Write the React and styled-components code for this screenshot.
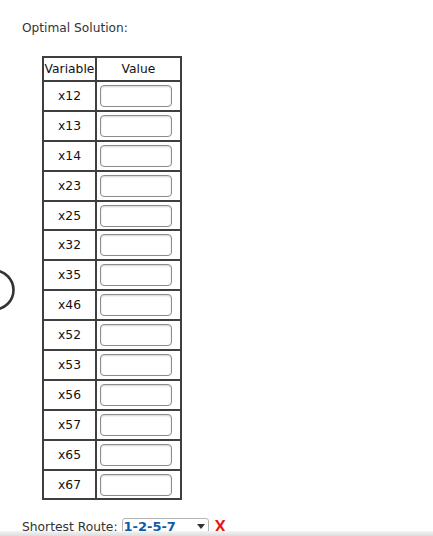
import React from 'react'
import styled, { createGlobalStyle } from 'styled-components'

const Global = createGlobalStyle`
  html, body {
    margin: 0;
    padding: 0;
    background: #fff;
  }
  body {
    font-family: "DejaVu Sans", Verdana, sans-serif;
    font-size: 12px;
    color: #222;
  }
`

const Page = styled.div`
  position: relative;
  height: 536px;
  overflow: hidden;
  padding: 21px 22px 0;
  box-sizing: border-box;
`

const Title = styled.div`
  color: #333;
  font-size: 12.2px;
  line-height: 15px;
`

const Table = styled.table`
  margin: 20px 0 0 20px;
  border: 1px solid #3f3f3f;
  border-spacing: 0;
  width: 140px;
  table-layout: fixed;
`

const HeadCell = styled.th`
  border: 1px solid #3f3f3f;
  font-weight: normal;
  color: #111;
  height: 22px;
  padding: 0;
  width: ${p => p.w}px;
  text-align: center;
  font-size: 12.3px;
`

const VarCell = styled.td`
  border: 1px solid #3f3f3f;
  height: 27.9px;
  padding: 0;
  text-align: center;
  color: #111;
  font-size: 12.3px;
`

const ValueCell = styled.td`
  border: 1px solid #3f3f3f;
  height: 27.9px;
  padding: 0 0 0 3px;
  vertical-align: middle;
`

const Input = styled.input`
  display: block;
  width: 72px;
  height: 22px;
  box-sizing: border-box;
  border: 1px solid #8c8c8c;
  border-radius: 4px;
  box-shadow: inset 0 1px 2px rgba(0, 0, 0, 0.18);
  background: #fff;
  padding: 0 3px;
  font-family: inherit;
  font-size: 12px;
  outline: none;
`

const RouteRow = styled.div`
  display: flex;
  align-items: center;
  gap: 4px;
  margin-top: 18px;
  color: #333;
  font-size: 12.3px;
`

const Select = styled.div`
  display: flex;
  align-items: center;
  justify-content: space-between;
  width: 87px;
  height: 17px;
  box-sizing: border-box;
  border: 1px solid #b5b5b5;
  border-radius: 3px;
  padding: 0 3px 0 1px;
  color: #0f5ca6;
  font-weight: bold;
  font-size: 13px;
`

const Arrow = styled.span`
  width: 0;
  height: 0;
  border-left: 4px solid transparent;
  border-right: 4px solid transparent;
  border-top: 5px solid #333;
`

const Wrong = styled.span`
  color: #e8141a;
  font-weight: bold;
  font-size: 17px;
  line-height: 17px;
  margin-left: 2px;
  font-family: "Liberation Sans", Arial, sans-serif;
`

const Ring = styled.svg`
  position: absolute;
  left: -30px;
  top: 268px;
`

const BottomShade = styled.div`
  position: absolute;
  left: 0;
  right: 0;
  bottom: 0;
  height: 5px;
  background: linear-gradient(#f4f4f4, #dcdcdc);
`

const vars = ['x12', 'x13', 'x14', 'x23', 'x25', 'x32', 'x35', 'x46', 'x52', 'x53', 'x56', 'x57', 'x65', 'x67']

export default function App() {
  return (
    <Page>
      <Global />
      <Ring width="46" height="44" viewBox="0 0 46 44">
        <circle cx="24" cy="22" r="19.5" fill="none" stroke="#333" strokeWidth="2.6" />
      </Ring>
      <Title>Optimal Solution:</Title>
      <Table>
        <thead>
          <tr>
            <HeadCell w={51}>Variable</HeadCell>
            <HeadCell w={83}>Value</HeadCell>
          </tr>
        </thead>
        <tbody>
          {vars.map(v => (
            <tr key={v}>
              <VarCell>{v}</VarCell>
              <ValueCell>
                <Input type="text" />
              </ValueCell>
            </tr>
          ))}
        </tbody>
      </Table>
      <RouteRow>
        <span>Shortest Route:</span>
        <Select>
          <span>1-2-5-7</span>
          <Arrow />
        </Select>
        <Wrong>X</Wrong>
      </RouteRow>
      <BottomShade />
    </Page>
  )
}
